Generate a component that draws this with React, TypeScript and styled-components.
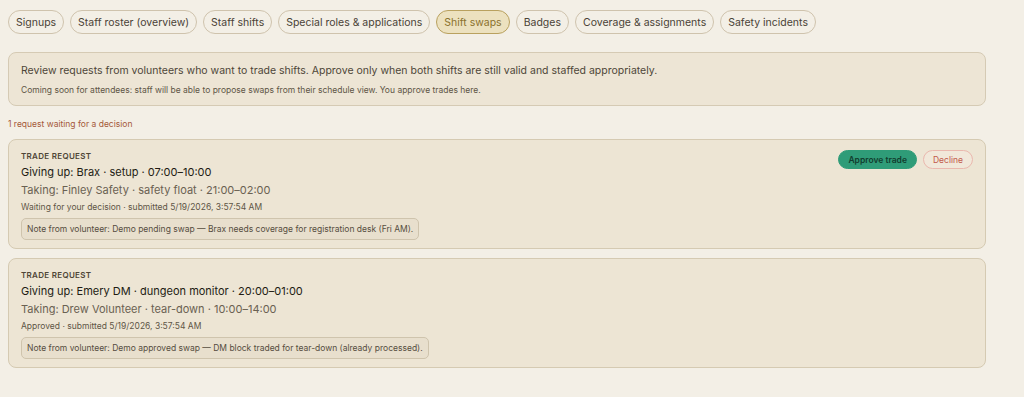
import styled, { createGlobalStyle } from 'styled-components'

const GlobalStyle = createGlobalStyle`
  html, body {
    margin: 0;
    padding: 0;
    background: #f3efe6;
  }
  body {
    font-family: Inter, "Noto Sans", "Liberation Sans", sans-serif;
    color: #3a3226;
  }
`

const tabs = [
  'Signups',
  'Staff roster (overview)',
  'Staff shifts',
  'Special roles & applications',
  'Shift swaps',
  'Badges',
  'Coverage & assignments',
  'Safety incidents',
]

const requests = [
  {
    giving: 'Giving up: Brax · setup · 07:00–10:00',
    taking: 'Taking: Finley Safety · safety float · 21:00–02:00',
    status: 'Waiting for your decision · submitted 5/19/2026, 3:57:54 AM',
    note: 'Note from volunteer: Demo pending swap — Brax needs coverage for registration desk (Fri AM).',
    pending: true,
  },
  {
    giving: 'Giving up: Emery DM · dungeon monitor · 20:00–01:00',
    taking: 'Taking: Drew Volunteer · tear-down · 10:00–14:00',
    status: 'Approved · submitted 5/19/2026, 3:57:54 AM',
    note: 'Note from volunteer: Demo approved swap — DM block traded for tear-down (already processed).',
    pending: false,
  },
]

const Page = styled.div`
  padding: 10px 38px 20px 8px;
`

const TabBar = styled.nav`
  display: flex;
  gap: 6px;
  flex-wrap: wrap;
`

const Tab = styled.button<{ active?: boolean }>`
  height: 24px;
  padding: 0 7px;
  border-radius: 999px;
  font-family: inherit;
  font-size: 10.5px;
  border: 1px solid ${p => (p.active ? '#b9a15f' : '#cfc3ad')};
  background: ${p => (p.active ? '#ece1bf' : '#f3efe6')};
  color: ${p => (p.active ? '#8b712d' : '#4a4236')};
  cursor: pointer;
`

const InfoBox = styled.section`
  margin-top: 18px;
  padding: 10px 12px 8px;
  border: 1px solid #d5cab4;
  border-radius: 8px;
  background: #ede5d5;
`

const InfoText = styled.p<{ small?: boolean }>`
  margin: 0;
  font-size: ${p => (p.small ? '8.5px' : '10.5px')};
  line-height: ${p => (p.small ? '13px' : '16px')};
  color: ${p => (p.small ? '#5e5546' : '#4d4538')};
  & + & {
    margin-top: 5px;
  }
`

const PendingCount = styled.div`
  margin: 13px 0 10px;
  font-size: 8.5px;
  color: #a5593a;
`

const List = styled.div`
  display: flex;
  flex-direction: column;
  gap: 9px;
`

const Card = styled.article`
  display: flex;
  justify-content: space-between;
  align-items: flex-start;
  padding: 10px 12px 8px;
  border: 1px solid #d5cab2;
  border-radius: 8px;
  background: #ede5d4;
`

const Details = styled.div`
  display: flex;
  flex-direction: column;
`

const Kicker = styled.div`
  font-size: 8px;
  font-weight: 600;
  letter-spacing: 0.3px;
  color: #4f4637;
  line-height: 12px;
`

const Giving = styled.div`
  margin-top: 3px;
  font-size: 11px;
  line-height: 15px;
  color: #221c13;
`

const Taking = styled.div`
  margin-top: 3px;
  font-size: 11px;
  line-height: 15px;
  color: #6a6152;
`

const Status = styled.div`
  margin-top: 3px;
  font-size: 8.5px;
  line-height: 12px;
  color: #5e5546;
`

const Note = styled.div`
  align-self: flex-start;
  margin-top: 5px;
  padding: 4px 5px;
  font-size: 8.5px;
  line-height: 12px;
  color: #564d3f;
  background: #e8dfcd;
  border: 1px solid #cfc4ad;
  border-radius: 5px;
`

const Actions = styled.div`
  display: flex;
  gap: 6px;
`

const PillButton = styled.button<{ variant: 'approve' | 'decline' }>`
  height: 19px;
  padding: 0 9px;
  border-radius: 999px;
  font-family: inherit;
  font-size: 8.5px;
  font-weight: ${p => (p.variant === 'approve' ? 600 : 400)};
  border: 1px solid ${p => (p.variant === 'approve' ? '#2f9c78' : '#eab8ae')};
  background: ${p => (p.variant === 'approve' ? '#2f9c78' : '#f1e8da')};
  color: ${p => (p.variant === 'approve' ? '#123d2e' : '#c25a4b')};
  cursor: pointer;
`

export default function App() {
  return (
    <>
      <GlobalStyle />
      <Page>
        <TabBar>
          {tabs.map(t => (
            <Tab key={t} active={t === 'Shift swaps'}>
              {t}
            </Tab>
          ))}
        </TabBar>
        <InfoBox>
          <InfoText>
            Review requests from volunteers who want to trade shifts. Approve only when both shifts are still valid and staffed appropriately.
          </InfoText>
          <InfoText small>
            Coming soon for attendees: staff will be able to propose swaps from their schedule view. You approve trades here.
          </InfoText>
        </InfoBox>
        <PendingCount>1 request waiting for a decision</PendingCount>
        <List>
          {requests.map(r => (
            <Card key={r.giving}>
              <Details>
                <Kicker>TRADE REQUEST</Kicker>
                <Giving>{r.giving}</Giving>
                <Taking>{r.taking}</Taking>
                <Status>{r.status}</Status>
                <Note>{r.note}</Note>
              </Details>
              {r.pending && (
                <Actions>
                  <PillButton variant="approve">Approve trade</PillButton>
                  <PillButton variant="decline">Decline</PillButton>
                </Actions>
              )}
            </Card>
          ))}
        </List>
      </Page>
    </>
  )
}
